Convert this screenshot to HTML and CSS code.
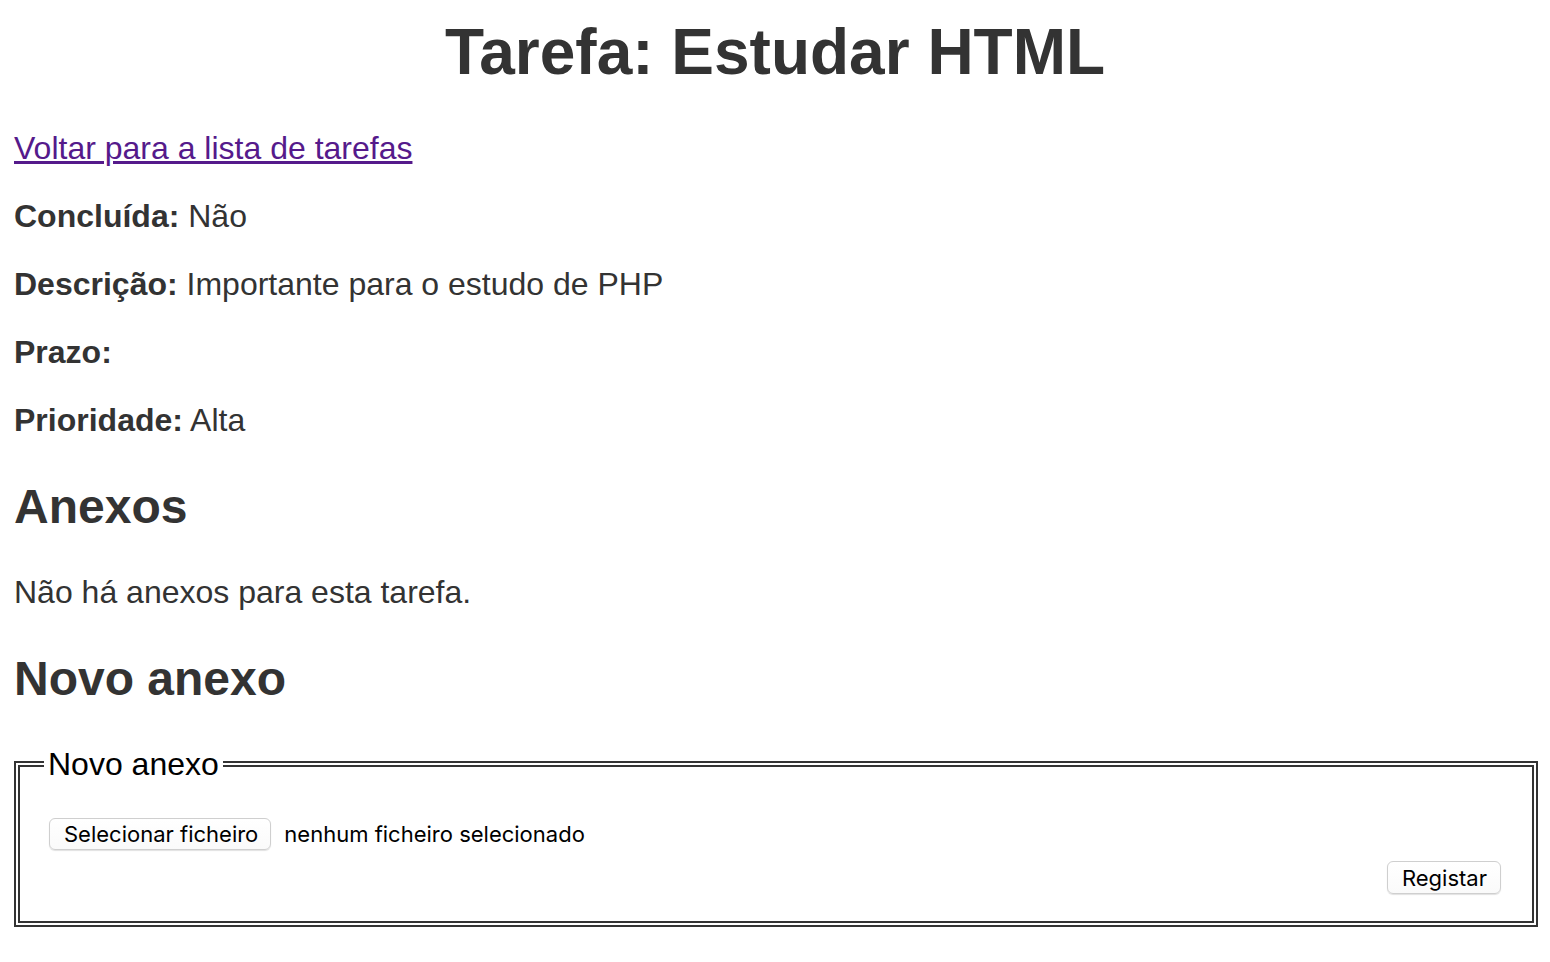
FILE: index.html
```html
<!DOCTYPE html>
<html lang="pt">
<head>
<meta charset="utf-8">
<title>Tarefa: Estudar HTML</title>
<link rel="stylesheet" href="styles.css">
</head>
<body>
  <h1 class="page-title">Tarefa: Estudar HTML</h1>
  <p class="line"><a class="back-link" href="#">Voltar para a lista de tarefas</a></p>
  <p class="line"><strong class="label">Concluída:</strong> Não</p>
  <p class="line"><strong class="label">Descrição:</strong> Importante para o estudo de PHP</p>
  <p class="line"><strong class="label">Prazo:</strong> </p>
  <p class="line"><strong class="label">Prioridade:</strong> Alta</p>

  <h2 class="section-title">Anexos</h2>
  <p class="line">Não há anexos para esta tarefa.</p>

  <h2 class="section-title">Novo anexo</h2>
  <form class="attach-form" action="#">
    <fieldset class="attach">
      <legend class="attach-legend">Novo anexo</legend>
      <div class="file-row">
        <label class="file-picker">
          <input class="file-input" type="file" name="anexo">
          <span class="btn btn-file">Selecionar ficheiro</span>
        </label>
        <span class="file-name">nenhum ficheiro selecionado</span>
      </div>
      <div class="submit-row">
        <button class="btn btn-submit" type="button">Registar</button>
      </div>
    </fieldset>
  </form>
</body>
</html>
```
FILE: styles.css
```css
html {
  background: #ffffff;
}

body {
  margin: 0;
  padding: 15px 14px 0 14px;
  font-family: "Liberation Sans", Arial, Helvetica, sans-serif;
  font-size: 32px;
  line-height: 36px;
  color: #333333;
}

.page-title {
  margin: 0 0 41px 0;
  font-size: 64px;
  line-height: normal;
  font-weight: bold;
  text-align: center;
}

.line {
  margin: 32px 0;
}

.back-link {
  color: #551a8b;
  text-decoration: underline;
}

.label {
  font-weight: bold;
}

.section-title {
  margin: 41px 0 40px 0;
  font-size: 48px;
  line-height: normal;
  font-weight: bold;
}

.attach-form {
  margin: 0;
}

.attach {
  margin: 40px -2px 0 0;
  padding: 36px 24px 27px 24px;
  border: 6px double #333333;
  min-width: 0;
}

.attach-legend {
  padding: 0 4px;
  font-size: 32px;
  line-height: 36px;
  color: #000000;
}

.file-row {
  display: flex;
  align-items: center;
  gap: 13px;
  margin-left: 5px;
  height: 32px;
}

.file-picker {
  display: flex;
}

.file-input {
  display: none;
}

.btn {
  display: inline-flex;
  align-items: center;
  box-sizing: border-box;
  height: 32px;
  padding: 0 13px;
  font-family: Inter, "Liberation Sans", sans-serif;
  font-size: 22px;
  color: #000000;
  background: linear-gradient(#ffffff, #fafafa);
  border: 1px solid #cfcfcf;
  border-radius: 6px;
  box-shadow: 0 1px 1px rgba(0, 0, 0, 0.12);
  cursor: default;
}

.btn-file {
  padding: 0 12px 0 14px;
}

.file-name {
  font-family: Inter, "Liberation Sans", sans-serif;
  font-size: 22px;
  color: #000000;
}

.submit-row {
  display: flex;
  justify-content: flex-end;
  margin-top: 11px;
  margin-right: 7px;
}

.btn-submit {
  height: 33px;
  padding: 0 13px 0 14px;
}
```
